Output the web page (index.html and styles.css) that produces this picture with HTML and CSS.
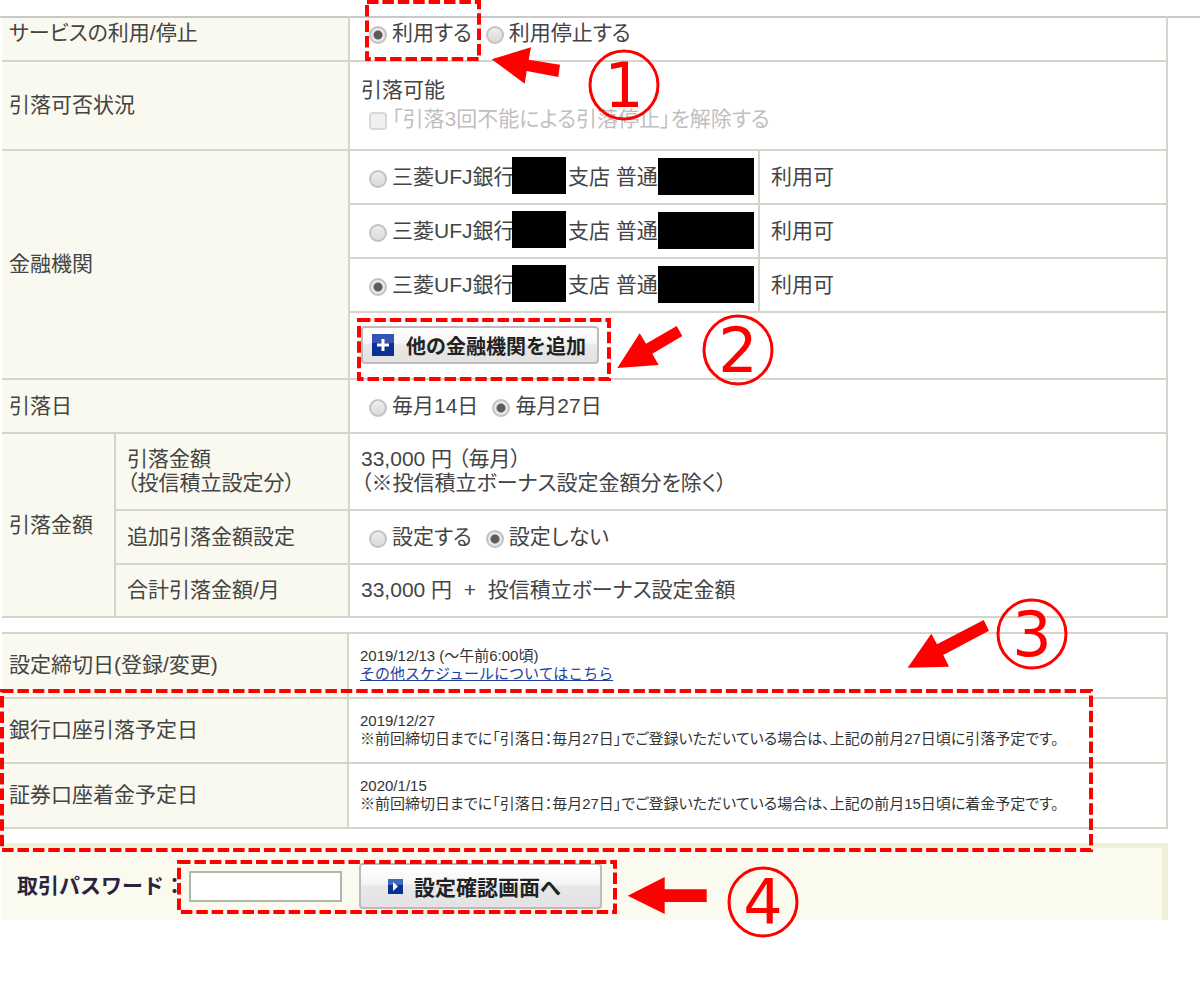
FILE: index.html
```html
<!DOCTYPE html>
<html lang="ja">
<head>
  <meta charset="UTF-8" />
  <meta name="viewport" content="width=device-width, initial-scale=1.0"/>
  <title>引落サービス設定</title>
  <link rel="stylesheet" href="styles.css">
</head>
<body>

  <div class="top-line"></div>

  <form class="page">
    <table class="settings">
      <colgroup>
        <col class="col-group"><col class="col-item"><col class="col-bank"><col>
      </colgroup>
      <tr class="first">
        <th colspan="2">サービスの利用/停止</th>
        <td colspan="2">
          <div class="choices">
            <label><input type="radio" name="service" checked>利用する</label>
            <label><input type="radio" name="service">利用停止する</label>
          </div>
        </td>
      </tr>
      <tr class="status">
        <th colspan="2">引落可否状況</th>
        <td colspan="2">
          引落可能
          <div class="choices">
            <label class="disabled"><input type="checkbox" disabled>「引落3回不能による引落停止」を解除する</label>
          </div>
        </td>
      </tr>
      <tr>
        <th colspan="2" rowspan="4">金融機関</th>
        <td>
          <div class="choices">
            <label><input type="radio" name="bank"><span class="bank-name">三菱UFJ銀行</span><span class="mask"></span>支店 普通<span class="mask wide"></span></label>
          </div>
        </td>
        <td>利用可</td>
      </tr>
      <tr>
        <td>
          <div class="choices">
            <label><input type="radio" name="bank"><span class="bank-name">三菱UFJ銀行</span><span class="mask"></span>支店 普通<span class="mask wide"></span></label>
          </div>
        </td>
        <td>利用可</td>
      </tr>
      <tr>
        <td>
          <div class="choices">
            <label><input type="radio" name="bank" checked><span class="bank-name">三菱UFJ銀行</span><span class="mask"></span>支店 普通<span class="mask wide"></span></label>
          </div>
        </td>
        <td>利用可</td>
      </tr>
      <tr class="add">
        <td colspan="2">
          <button type="button" class="btn btn-add">
            <svg width="22" height="22" viewBox="0 0 22 22">
              <rect width="22" height="22" fill="#0a2f96"/>
              <path d="M0 0h22v9H0z" fill="#3355b4"/>
              <path d="M11 5v12M5 11h12" stroke="#fff" stroke-width="3"/>
            </svg>
            他の金融機関を追加
          </button>
        </td>
      </tr>
      <tr>
        <th colspan="2">引落日</th>
        <td colspan="2">
          <div class="choices">
            <label><input type="radio" name="day">毎月14日</label>
            <label><input type="radio" name="day" checked>毎月27日</label>
          </div>
        </td>
      </tr>
      <tr>
        <th rowspan="3">引落金額</th>
        <th class="item">引落金額<br>（投信積立設定分）</th>
        <td colspan="2">33,000 円 （毎月）<br>（※投信積立ボーナス設定金額分を除く）</td>
      </tr>
      <tr>
        <th class="item">追加引落金額設定</th>
        <td colspan="2">
          <div class="choices">
            <label><input type="radio" name="extra">設定する</label>
            <label><input type="radio" name="extra" checked>設定しない</label>
          </div>
        </td>
      </tr>
      <tr>
        <th class="item">合計引落金額/月</th>
        <td colspan="2">33,000 円 &nbsp;+&nbsp; 投信積立ボーナス設定金額</td>
      </tr>
    </table>

    <table class="schedule">
      <colgroup>
        <col class="col-label"><col>
      </colgroup>
      <tr class="deadline">
        <th>設定締切日(登録/変更)</th>
        <td>2019/12/13 (～午前6:00頃)<br><a href="#">その他スケジュールについてはこちら</a></td>
      </tr>
      <tr>
        <th>銀行口座引落予定日</th>
        <td>2019/12/27<br>※前回締切日までに「引落日：毎月27日」でご登録いただいている場合は、上記の前月27日頃に引落予定です。</td>
      </tr>
      <tr>
        <th>証券口座着金予定日</th>
        <td>2020/1/15<br>※前回締切日までに「引落日：毎月27日」でご登録いただいている場合は、上記の前月15日頃に着金予定です。</td>
      </tr>
    </table>

    <div class="confirm">
      <label for="password">取引パスワード：</label>
      <input type="password" id="password">
      <button type="button" class="btn btn-confirm">
        <svg width="15" height="15" viewBox="0 0 15 15">
          <rect width="15" height="15" fill="#0a2f96"/>
          <path d="M0 0h15v6H0z" fill="#3f68bd"/>
          <path d="M5 3l5 4.500-5 4.500z" fill="#fff"/>
        </svg>
        設定確認画面へ
      </button>
    </div>
  </form>

  <!-- numbered guide marks over the form -->
  <svg class="guide" width="1200" height="994" viewBox="0 0 1200 994">
    <g class="frame">
      <rect x="367" y="2" width="112" height="57"/>
      <rect x="359" y="320" width="250" height="59"/>
      <rect x="2" y="691" width="1089" height="159"/>
      <rect x="179" y="862" width="436" height="50"/>
    </g>
    <g class="arrow">
      <path d="M491.700 59.300L531 47.300 528.700 59.700 560 64.700 558.300 77 526.700 71 524.700 83.700z"/>
      <path d="M617.300 368L639.700 333.300 646 343.700 676.700 326 682.300 336 652.300 353.700 658.700 365z"/>
      <path d="M907.700 667.700L931.300 633.700 937 644.300 983.700 620 989 630.700 943.300 655 949 666.700z"/>
      <path d="M627.700 895.700L664.700 877V889.300H706.700V902H664.700V914z"/>
    </g>
    <g class="ring">
      <circle cx="624" cy="85" r="34"/>
      <circle cx="738" cy="350" r="34"/>
      <circle cx="1032" cy="634" r="34"/>
      <circle cx="763" cy="902" r="34"/>
    </g>
    <g class="number">
      <text x="624" y="107">1</text>
      <text x="738" y="372">2</text>
      <text x="1032" y="656">3</text>
      <text x="763" y="924">4</text>
    </g>
  </svg>

</body>
</html>
```

FILE: styles.css
```css
* { box-sizing: border-box; }
body {
  margin: 0;
  font-family: "Liberation Sans", "Noto Sans CJK JP", sans-serif;
  font-feature-settings: "palt";
  font-size: 21px;
  line-height: 24px;
  background: #ffffff;
  color: #444444;
}

.top-line {
  height: 18px;
  margin-bottom: -2px;
  border-bottom: 2px solid #c9c9c9;
}

.page {
  padding: 0 32px 0 2px;
}

table {
  width: 100%;
  table-layout: fixed;
  border-collapse: collapse;
}

.col-group { width: 113px; }
.col-item { width: 234px; }
.col-bank { width: 410px; }
.col-label { width: 346px; }

th, td {
  border: 2px solid #d6d5ca;
  padding: 13px 11px 14px;
  text-align: left;
  font-weight: normal;
}

th {
  background: #f9f9ef;
  padding-left: 7px;
}

th:first-child { border-left: none; }
th.item {
  border-left: 2px solid #d6d5ca;
  padding-left: 11px;
}

.first th, .first td {
  border-top-color: #c9c9c9;
  padding-top: 2px;
  padding-bottom: 15px;
}

.status td { padding: 16px 11px 18px; }
.status .choices { margin-top: 4px; }
.add td { padding: 13px 11px 14px; }

.schedule { margin-top: 14px; }
.schedule td {
  font-size: 15px;
  line-height: 18px;
  color: #333333;
}

.deadline td { font-feature-settings: normal; }

a { color: #1f3f9f; }

.choices {
  display: flex;
  gap: 14px;
  padding-left: 8px;
  line-height: 25px;
}

.choices label {
  display: flex;
  align-items: center;
  white-space: pre;
}

.choices .disabled { color: #bfbfbf; }

.choices input {
  appearance: none;
  flex: none;
  width: 18px;
  height: 18px;
  margin: 5px 5px 0 0;
  border: 2px solid #c2c2c2;
  background: linear-gradient(#eeeeee, #dadada);
}

.choices input[type="radio"] { border-radius: 50%; }
.choices input[type="radio"]:checked {
  background: radial-gradient(circle, #5c5c5c 4px, #e8e8e8 5px);
}

.choices input[type="checkbox"] {
  border-color: #d8d8d8;
  border-radius: 4px;
  background: #f0f0f0;
}

.bank-name { width: 120px; }

.mask {
  width: 54px;
  height: 37px;
  margin: -7px 2px -5px 0;
  background: #000000;
}

.mask.wide {
  width: 96px;
  margin: -6px 0;
}

.btn {
  display: flex;
  align-items: center;
  border: 2px solid #bcbcbc;
  border-radius: 4px;
  background: linear-gradient(#ffffff, #f5f5f5 45%, #e8e8e8 50%, #e2e2e2);
  color: #222222;
  font-family: inherit;
  font-feature-settings: normal;
  font-weight: bold;
}

.btn-add {
  gap: 12px;
  width: 238px;
  height: 38px;
  padding: 0 9px;
  font-size: 20px;
}

.btn-confirm {
  gap: 11px;
  width: 243px;
  height: 46px;
  margin-left: 17px;
  padding: 0 27px;
  font-size: 21px;
}

.confirm {
  display: flex;
  align-items: center;
  margin-top: 14px;
  padding: 15px 15px 11px;
  border-top: 5px solid #f0f0d8;
  border-right: 6px solid #f0f0d8;
  background: #fafaee;
}

.confirm label {
  width: 172px;
  color: #2a2440;
  font-feature-settings: normal;
  font-weight: bold;
}

.confirm input {
  width: 153px;
  height: 31px;
  border: 2px solid #b4b4b0;
  background: #ffffff;
}

.guide {
  position: absolute;
  top: 0;
  left: 0;
  pointer-events: none;
}

.frame {
  fill: none;
  stroke: #ff0000;
  stroke-width: 4;
  stroke-dasharray: 11.500 3.900;
}

.arrow { fill: #ff0000; }

.ring {
  fill: none;
  stroke: #ff0000;
  stroke-width: 3;
}

.number {
  fill: #ff0000;
  font-family: "DejaVu Sans", sans-serif;
  font-size: 62px;
  text-anchor: middle;
}
```
